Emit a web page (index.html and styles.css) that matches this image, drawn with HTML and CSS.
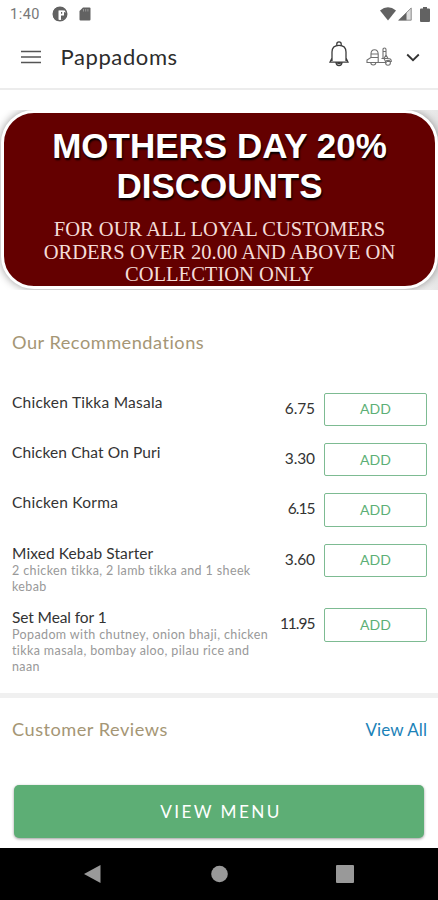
FILE: index.html
```html
<!DOCTYPE html>
<html lang="en">
<head>
  <meta charset="UTF-8">
  <meta name="viewport" content="width=device-width, initial-scale=1.0">
  <title>Pappadoms</title>
  <link rel="stylesheet" href="styles.css">
</head>
<body>
  <div class="status-bar">
    <span class="clock">1:40</span>
    <svg class="status-app" width="16" height="16" viewBox="0 0 16 16"><circle cx="8" cy="8" r="6.7" fill="none" stroke="#626262" stroke-width="1.6"/><path d="M8 1Q1 1 1 8T6.500 14.800V4.500H12L13.500 4Q11.500 1 8 1z" fill="#626262"/><path d="M7 4.800h4.500V9H9v4.500H7z" fill="#fff"/><path d="M9 6h1.200v1.800H9zM9 9.500h3V6L15 7q0 4-3 6l-3 1z" fill="#626262"/></svg>
    <svg class="status-card" width="12" height="14" viewBox="0 0 12 14"><path d="M4 .5h6.500q1 0 1 1v11q0 1-1 1h-9q-1 0-1-1V4z" fill="#626262"/><path d="M4.500 2v2.500M6.700 2v2.500M8.900 2v2.500" stroke="#999" stroke-width="1"/></svg>
    <div class="status-right">
      <svg width="16" height="14" viewBox="0 0 16 14"><path d="M0 3.500Q8-3 16 3.500L8 13.500z" fill="#626262"/></svg>
      <svg class="signal" width="14" height="14" viewBox="0 0 14 14"><path d="M.5 13.300L13.500.5v12.800z" fill="#ddd"/><path d="M.5 13.300L8.500 5.400v7.900z" fill="#626262"/><path d="M.7 13.200L13.200 1v12.200z" fill="none" stroke="#777" stroke-width=".8"/></svg>
      <svg class="battery" width="10" height="15" viewBox="0 0 10 15"><path d="M3 0h4v1.500h2q1 0 1 1V14q0 1-1 1H1q-1 0-1-1V2.500q0-1 1-1h2z" fill="#626262"/></svg>
    </div>
  </div>

  <header>
    <svg class="burger" width="20" height="14" viewBox="0 0 20 14"><path d="M0 1.500h20M0 7h20M0 12.500h20" stroke="#555" stroke-width="1.4"/></svg>
    <h1>Pappadoms</h1>
    <div class="header-icons">
      <svg width="20" height="26" viewBox="0 0 20 26" fill="none" stroke="#3c3c3c" stroke-width="1.3"><path d="M7.800 4.500V3Q7.800.8 10 .8T12.200 3v1.500M3 20V11Q3 4.300 10 4.300T17 11v9M3 17L1 21.200H19L17 17M7 21.500Q7.200 24.500 10 24.500T13 21.500"/><path d="M8.200 22h3.600" stroke-width="2"/></svg>
      <svg class="delivery" width="26" height="20" viewBox="0 0 26 20" fill="none" stroke="#707070" stroke-width="1.1"><path d="M5 7Q5 2.800 8.500 2.800T12.200 7V15M5 7h7.200M5 7v3.500L1 13v2.500h4M5 10.500h7.200M9.500 15.500H20L18 11.500H15.500M17 11.500V2Q17 1 18.500 1T20 2.500V8L22 11.500Q25.500 11.500 25.300 14.500H21M17 4.500h3M20 8l-2 3.500h4"/><path d="M4.800 15.500a2.500 2.500 0 0 0 5 0z"/><circle cx="22" cy="15.800" r="2.400"/></svg>
      <svg class="chevron" width="14" height="9" viewBox="0 0 14 9"><path d="M1.200 1.500L7 7.200l5.800-5.700" fill="none" stroke="#333" stroke-width="1.8"/></svg>
    </div>
  </header>

  <section class="banner">
    <div class="banner-card">
      <h2>MOTHERS DAY 20%<br>DISCOUNTS</h2>
      <p>FOR OUR ALL LOYAL CUSTOMERS<br>ORDERS OVER 20.00 AND ABOVE ON<br>COLLECTION ONLY</p>
    </div>
  </section>

  <section class="recommendations">
    <h3>Our Recommendations</h3>
    <div class="item">
      <div class="info"><h4>Chicken Tikka Masala</h4></div>
      <span class="price">6.75</span><button class="add">ADD</button>
    </div>
    <div class="item">
      <div class="info"><h4 class="tight">Chicken Chat On Puri</h4></div>
      <span class="price">3.30</span><button class="add">ADD</button>
    </div>
    <div class="item">
      <div class="info"><h4>Chicken Korma</h4></div>
      <span class="price narrow">6.15</span><button class="add">ADD</button>
    </div>
    <div class="item">
      <div class="info"><h4 class="tight">Mixed Kebab Starter</h4><p>2 chicken tikka, 2 lamb tikka and 1 sheek<br>kebab</p></div>
      <span class="price">3.60</span><button class="add">ADD</button>
    </div>
    <div class="item">
      <div class="info"><h4 class="tighter">Set Meal for 1</h4><p>Popadom with chutney, onion bhaji, chicken<br>tikka masala, bombay aloo, pilau rice and<br>naan</p></div>
      <span class="price narrow">11.95</span><button class="add">ADD</button>
    </div>
  </section>

  <section class="reviews">
    <h3>Customer Reviews</h3>
    <a href="#">View All</a>
  </section>

  <div class="menu-bar">
    <button class="view-menu">VIEW MENU</button>
  </div>

  <footer>
    <svg width="17" height="20" viewBox="0 0 17 20"><path d="M16.500 1v18L0 10z" fill="#999"/></svg>
    <svg width="18" height="18" viewBox="0 0 18 18"><circle cx="9.500" cy="9" r="8.300" fill="#999"/></svg>
    <svg width="18" height="18" viewBox="0 0 18 18"><rect width="18" height="18" rx="1" fill="#999"/></svg>
  </footer>
</body>
</html>
```
FILE: styles.css
```css
/* Base reset */
*, *::before, *::after { box-sizing: border-box; margin: 0; padding: 0; }
body { width: 438px; height: 900px; overflow: hidden; background: #fff; color: #333; font-family: Lato, "Liberation Sans", sans-serif; display: flex; flex-direction: column; }
svg { display: block; flex: none; }
button { font-family: inherit; }
h1, h3, h4 { font-weight: 400; white-space: nowrap; }

/* Status bar */
.status-bar { height: 28px; display: flex; align-items: center; padding: 0 8px 0 10px; }
.clock { width: 42px; font-family: Roboto, sans-serif; font-size: 14.5px; letter-spacing: 0.5px; color: #777; }
.status-card { margin-left: 11px; }
.status-right { margin-left: auto; display: flex; align-items: center; }
.signal { margin-left: 2px; }
.battery { margin-left: 8px; }

/* Header */
header { height: 62px; display: flex; align-items: center; padding: 0 18px 2px 21px; border-bottom: 2px solid #ececec; }
h1 { margin-left: 19.5px; font-size: 22px; letter-spacing: 0.6px; line-height: 28px; color: #2c2c2c; }
.header-icons { margin-left: auto; display: flex; align-items: center; }
.header-icons > svg:first-child { margin-top: -7px; }
.delivery { margin-left: 17px; }
.chevron { margin-left: 14px; }

/* Banner */
.banner { height: 180px; margin-top: 20px; padding: 0 0 1px 1px; background: linear-gradient(90deg, #fff, #fff 400px, #e6e6e6); overflow: hidden; }
.banner-card { height: 179px; border: 3px solid #fff; border-radius: 33px; background: #640000; text-align: center; box-shadow: 0 0 8px rgba(0,0,0,0.4); padding-top: 13px; }
.banner h2 { font: bold 35px/40px "Liberation Sans", Arial, sans-serif; color: #fff; text-shadow: 1px 2px 2px #000; white-space: nowrap; }
.banner p { margin-top: 12px; font: 20.55px/22.5px "Liberation Serif", "Times New Roman", serif; color: #f4dcd8; white-space: nowrap; }

/* Recommendations */
.recommendations { height: 403px; padding: 40px 11px 0 12px; }
h3 { font-size: 18.2px; line-height: 24px; letter-spacing: 0.5px; color: #a59675; }
.recommendations h3 { margin-bottom: 38.5px; }
.item { display: flex; align-items: flex-start; min-height: 50.4px; }
.item:nth-of-type(4) { min-height: 64.4px; }
.info { flex: 1; min-width: 0; }
h4 { font-size: 15.5px; line-height: 19px; letter-spacing: 0.25px; color: #333; }
.tight { letter-spacing: 0.1px; }
.tighter { letter-spacing: -0.1px; }
.info p { font-size: 12.5px; line-height: 16.2px; letter-spacing: 0.38px; color: #999; white-space: nowrap; }
.price { width: 44px; margin-right: 9px; padding-top: 5px; font-size: 15.5px; line-height: 20px; letter-spacing: -0.1px; text-align: right; color: #333; }
.narrow { letter-spacing: -1px; padding-right: 0.5px; }
.add { flex: none; width: 103px; height: 33.5px; border: 1.5px solid #7dbb92; border-radius: 2px; background: #fff; color: #5caf76; font-size: 14px; line-height: 20px; }

/* Reviews */
.reviews { height: 82px; padding: 19px 11px 0 12px; border-top: 5px solid #f0f0f0; display: flex; justify-content: space-between; }
.reviews a { padding-top: 1px; font-size: 17px; line-height: 24px; letter-spacing: 0.1px; color: #1b82b8; text-decoration: none; white-space: nowrap; }

/* Bottom buttons */
.menu-bar { flex: 1; padding: 10px 14px 0; }
.view-menu { display: block; width: 410px; height: 53px; border: 0; border-radius: 5px; background: #5dae75; color: #fff; font-size: 17.2px; letter-spacing: 2.4px; padding-left: 4px; box-shadow: 0 1px 3px rgba(0,0,0,0.4); }
footer { height: 52px; background: #000; display: flex; align-items: center; justify-content: space-between; padding: 0 84px; }
```
